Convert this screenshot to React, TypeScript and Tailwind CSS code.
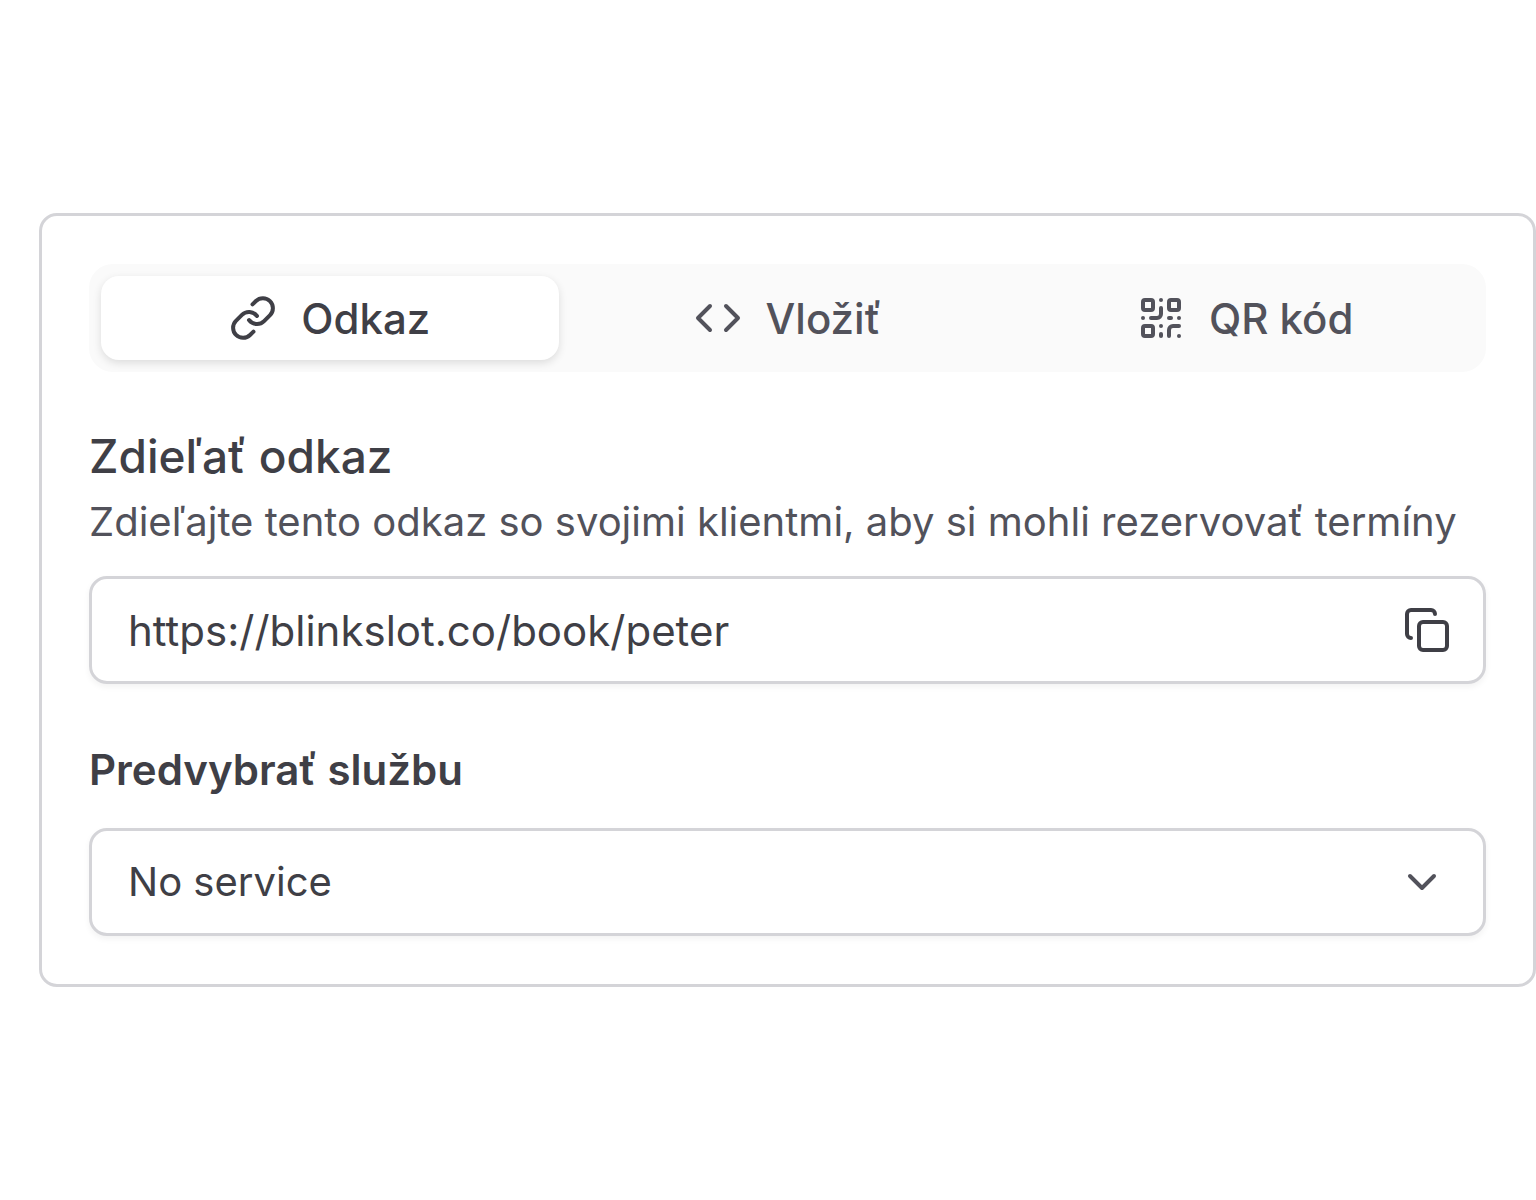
import { useState } from 'react';
import { ChevronDown, Code, Copy, Link, QrCode } from 'lucide-react';

const tabs = [
  { id: 'link', label: 'Odkaz', icon: Link },
  { id: 'embed', label: 'Vložiť', icon: Code },
  { id: 'qr', label: 'QR kód', icon: QrCode },
];

export default function App() {
  const [active, setActive] = useState('link');

  return (
    <main className="flex min-h-screen items-center bg-white pl-[39px] font-['Inter',sans-serif] text-[#3f3f46]">
      <section className="w-full rounded-[18px] border-[3px] border-[#d4d4d8] px-[47px] py-12">
        {/* Tabs */}
        <div role="tablist" className="grid grid-cols-3 rounded-3xl bg-[#fafafa] p-3">
          {tabs.map(({ id, label, icon: Icon }) => (
            <button
              key={id}
              type="button"
              role="tab"
              aria-selected={active === id}
              onClick={() => setActive(id)}
              className={`flex h-21 items-center justify-center gap-6 rounded-[18px] text-[42px] font-medium ${
                active === id
                  ? 'bg-white text-[#3f3f46] shadow-[0_3px_8px_rgba(0,0,0,0.12)]'
                  : 'text-[#52525b]'
              }`}
            >
              <Icon size={48} strokeWidth={2} />
              {label}
            </button>
          ))}
        </div>

        {/* Share link */}
        <div className="mt-12">
          <h2 className="text-[46px] leading-[72px] font-medium">
            <label htmlFor="share-link">Zdieľať odkaz</label>
          </h2>
          <p className="text-[40px] leading-[60px] text-[#52525b]">
            Zdieľajte tento odkaz so svojimi klientmi, aby si mohli rezervovať termíny
          </p>
          <div className="mt-6 flex h-27 items-center rounded-[18px] border-[3px] border-[#d4d4d8] pr-8 pl-9 shadow-[0_3px_6px_rgba(0,0,0,0.05)]">
            <input
              id="share-link"
              type="text"
              readOnly
              value="https://blinkslot.co/book/peter"
              className="min-w-0 flex-1 bg-transparent text-[42px] outline-none"
            />
            <button type="button" aria-label="Kopírovať odkaz">
              <Copy size={48} strokeWidth={2} />
            </button>
          </div>
        </div>

        {/* Service */}
        <div className="mt-14">
          <label htmlFor="service" className="block text-[42px] leading-[60px] font-semibold">
            Predvybrať službu
          </label>
          <div className="relative mt-7">
            <select
              id="service"
              className="h-27 w-full appearance-none rounded-[18px] border-[3px] border-[#d4d4d8] bg-white pr-24 pl-9 text-[40px] shadow-[0_3px_6px_rgba(0,0,0,0.05)] outline-none"
            >
              <option>No service</option>
            </select>
            <ChevronDown
              size={48}
              className="pointer-events-none absolute inset-y-0 right-10 my-auto text-[#52525b]"
            />
          </div>
        </div>
      </section>
    </main>
  );
}
